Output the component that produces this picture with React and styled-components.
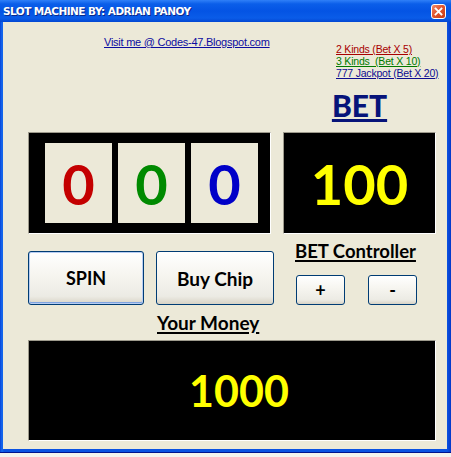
import React from 'react';
import styled, { createGlobalStyle } from 'styled-components';

const GlobalStyle = createGlobalStyle`
  html, body {
    margin: 0;
    padding: 0;
    background: #f4f3ee;
  }
`;

// Window frame
const Window = styled.div`
  width: 451px;
  height: 453px;
  box-sizing: border-box;
  display: flex;
  flex-direction: column;
  background: linear-gradient(to right, #0842d8 0px, #166aee 2px, #0a52e2 4px, #0a52e2 calc(100% - 4px), #0638c8 100%);
  border-bottom: 1px solid #00138c;
`;

const TitleBar = styled.div`
  height: 22px;
  flex: 0 0 22px;
  display: flex;
  align-items: center;
  justify-content: space-between;
  padding: 0 5px 0 3px;
  background: linear-gradient(to bottom, #2f80f8 0%, #0b5ee9 18%, #0454e4 50%, #0a5ce8 82%, #0347d2 100%);
`;

const Title = styled.span`
  font-family: "DejaVu Sans", sans-serif;
  font-weight: bold;
  font-size: 10.5px;
  letter-spacing: -0.55px;
  color: #ffffff;
  text-shadow: 1px 1px 0 #0a2a8a;
`;

const CloseButton = styled.div`
  width: 13px;
  height: 13px;
  border: 1px solid #ffffff;
  border-radius: 3px;
  background: linear-gradient(135deg, #f08a6c 0%, #e3562f 45%, #c83a14 100%);
  display: flex;
  align-items: center;
  justify-content: center;
`;

const Client = styled.div`
  flex: 1;
  margin: 0 4px 3px 3px;
  background: #ece9d8;
  padding: 0 11px 0 25px;
  display: flex;
  flex-direction: column;
`;

// Top area: link, payouts, reels and bet display
const TopGrid = styled.div`
  display: grid;
  grid-template-columns: 243px 153px;
  grid-template-rows: 110px 102px;
  column-gap: 12px;
`;

const LinkCell = styled.div`
  padding: 10px 0 0 76px;
`;

const SiteLink = styled.a`
  font-family: "Liberation Sans", Arial, sans-serif;
  font-size: 11px;
  line-height: 13px;
  letter-spacing: -0.25px;
  color: #0c0ca0;
  text-decoration: underline;
  cursor: pointer;
`;

const PayoutCell = styled.div`
  display: flex;
  flex-direction: column;
  padding-top: 21px;
`;

const PayoutList = styled.div`
  display: flex;
  flex-direction: column;
  padding-left: 53px;
`;

const Payout = styled.span`
  font-family: "Liberation Sans", Arial, sans-serif;
  font-size: 10.5px;
  line-height: 12px;
  letter-spacing: -0.2px;
  white-space: pre;
  color: ${p => p.$color};
  text-decoration: underline;
`;

const BetHeading = styled.div`
  margin-top: 8px;
  text-align: center;
  font-family: Lato, sans-serif;
  font-weight: 900;
  font-size: 30px;
  line-height: 36px;
  color: #07147a;
  text-decoration: underline;
  text-decoration-thickness: 3px;
  text-underline-offset: 2px;
`;

const Display = styled.div`
  box-sizing: border-box;
  background: #000000;
  border: 1px solid;
  border-color: #9d9a8c #ffffff #ffffff #9d9a8c;
  display: flex;
  align-items: center;
  justify-content: center;
  height: ${p => p.$height || '102px'};
  padding-left: ${p => p.$shift || '0px'};
`;

const ReelPanel = styled(Display)`
  justify-content: flex-start;
  gap: 6px;
  padding: 0 0 0 16px;
`;

const Reel = styled.div`
  width: 67px;
  height: 80px;
  background: #ece9d8;
  display: flex;
  align-items: center;
  justify-content: center;
  font-family: Lato, sans-serif;
  font-weight: bold;
  font-size: 56px;
  color: ${p => p.$color};
`;

const BigNumber = styled.span`
  font-family: Lato, sans-serif;
  font-weight: bold;
  font-size: ${p => p.$size};
  color: #ffff00;
`;

// Controls row
const ControlsGrid = styled.div`
  display: grid;
  grid-template-columns: 246px 153px;
  column-gap: 9px;
`;

const ActionGroup = styled.div`
  display: flex;
  gap: 12px;
  padding-top: 17px;
`;

const XpButton = styled.button`
  box-sizing: border-box;
  width: ${p => p.$width};
  height: ${p => p.$height};
  border: 1px solid #003c74;
  border-radius: 3px;
  background: linear-gradient(to bottom, #ffffff 0%, #f7f6f1 40%, #ecebe4 85%, #d8d3c6 100%);
  box-shadow: ${p => (p.$default ? 'inset 0 0 0 1px #b7cdf2, inset 0 -1px 0 1px #7fa3e0' : 'none')};
  font-family: Lato, sans-serif;
  font-weight: bold;
  font-size: ${p => p.$font || '18px'};
  color: #000000;
  padding: 0;
  cursor: pointer;
`;

const BetControls = styled.div`
  display: flex;
  flex-direction: column;
  padding-top: 6px;
`;

const SectionLabel = styled.div`
  font-family: Lato, sans-serif;
  font-weight: bold;
  font-size: ${p => p.$font || '18px'};
  line-height: 22px;
  color: #000000;
  text-decoration: underline;
  text-decoration-thickness: 2px;
  text-underline-offset: 2px;
  padding-left: ${p => p.$indent || '0px'};
  margin-top: ${p => p.$top || '0px'};
`;

const StepButtons = styled.div`
  display: flex;
  gap: 23px;
  padding-left: 13px;
  margin-top: 13px;
`;

const MoneyDisplay = styled(Display)`
  margin-top: 6px;
`;

const CloseIcon = () => (
  <svg width="9" height="9" viewBox="0 0 9 9">
    <path d="M1.5 1.5 L7.5 7.5 M7.5 1.5 L1.5 7.5" stroke="#ffffff" strokeWidth="1.8" strokeLinecap="square" />
  </svg>
);

const reels = [
  { value: 0, color: '#c40000' },
  { value: 0, color: '#008a00' },
  { value: 0, color: '#0000c8' },
];

const payouts = [
  { text: '2 Kinds (Bet X 5)', color: '#a80000' },
  { text: '3 Kinds  (Bet X 10)', color: '#007a00' },
  { text: '777 Jackpot (Bet X 20)', color: '#0c0c90' },
];

export default function App() {
  return (
    <>
      <GlobalStyle />
      <Window>
        <TitleBar>
          <Title>SLOT MACHINE BY: ADRIAN PANOY</Title>
          <CloseButton>
            <CloseIcon />
          </CloseButton>
        </TitleBar>

        <Client>
          <TopGrid>
            <LinkCell>
              <SiteLink>Visit me @ Codes-47.Blogspot.com</SiteLink>
            </LinkCell>
            <PayoutCell>
              <PayoutList>
                {payouts.map(p => (
                  <Payout key={p.text} $color={p.color}>{p.text}</Payout>
                ))}
              </PayoutList>
              <BetHeading>BET</BetHeading>
            </PayoutCell>

            <ReelPanel>
              {reels.map((r, i) => (
                <Reel key={i} $color={r.color}>{r.value}</Reel>
              ))}
            </ReelPanel>
            <Display>
              <BigNumber $size="56px">100</BigNumber>
            </Display>
          </TopGrid>

          <ControlsGrid>
            <ActionGroup>
              <XpButton $width="116px" $height="54px" $default>SPIN</XpButton>
              <XpButton $width="118px" $height="54px" $font="19px">Buy Chip</XpButton>
            </ActionGroup>
            <BetControls>
              <SectionLabel $indent="12px" $font="18.5px">BET Controller</SectionLabel>
              <StepButtons>
                <XpButton $width="49px" $height="30px">+</XpButton>
                <XpButton $width="49px" $height="30px">-</XpButton>
              </StepButtons>
            </BetControls>
          </ControlsGrid>

          <SectionLabel $indent="129px" $top="7px" $font="19px">Your Money</SectionLabel>
          <MoneyDisplay $height="101px" $shift="14px">
            <BigNumber $size="43px">1000</BigNumber>
          </MoneyDisplay>
        </Client>
      </Window>
    </>
  );
}
